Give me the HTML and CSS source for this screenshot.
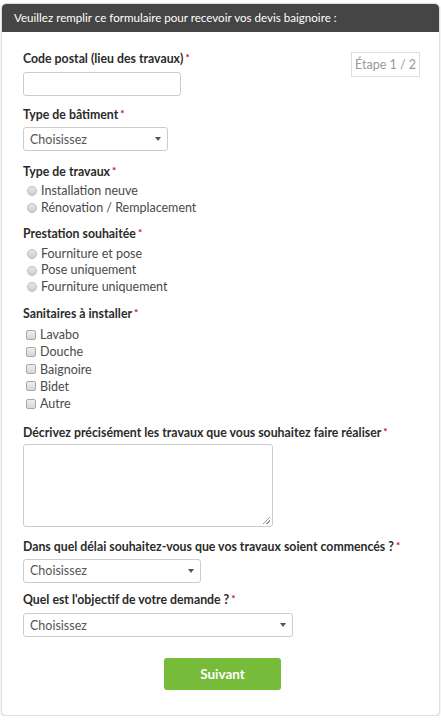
FILE: index.html
```html
<!DOCTYPE html>
<html lang="fr">
<head>
<meta charset="utf-8">
<title>Devis baignoire</title>
<link rel="stylesheet" href="styles.css">
</head>
<body>
<div class="card">
  <div class="card-head">Veuillez remplir ce formulaire pour recevoir vos devis baignoire :</div>
  <form class="card-body">
    <div class="row-top">
      <div class="field f-cp">
        <label class="lbl lbl-cp">Code postal (lieu des travaux)<span class="req">*</span></label>
        <input class="txt w-cp" type="text">
      </div>
      <div class="step">Étape 1 / 2</div>
    </div>

    <div class="field f-bat">
      <label class="lbl">Type de bâtiment<span class="req">*</span></label>
      <div class="sel w-bat"><span>Choisissez</span><i class="caret"></i></div>
    </div>

    <div class="field">
      <label class="lbl lbl-opts">Type de travaux<span class="req">*</span></label>
      <div class="opts">
        <label class="opt"><span class="radio"></span>Installation neuve</label>
        <label class="opt"><span class="radio"></span>Rénovation / Remplacement</label>
      </div>
    </div>

    <div class="field">
      <label class="lbl lbl-opts2">Prestation souhaitée<span class="req">*</span></label>
      <div class="opts opts3">
        <label class="opt"><span class="radio"></span>Fourniture et pose</label>
        <label class="opt"><span class="radio"></span>Pose uniquement</label>
        <label class="opt"><span class="radio"></span>Fourniture uniquement</label>
      </div>
    </div>

    <div class="field f-checks">
      <label class="lbl lbl-checks">Sanitaires à installer<span class="req">*</span></label>
      <div class="opts checks">
        <label class="opt"><span class="check"></span>Lavabo</label>
        <label class="opt"><span class="check"></span>Douche</label>
        <label class="opt"><span class="check"></span>Baignoire</label>
        <label class="opt"><span class="check"></span>Bidet</label>
        <label class="opt"><span class="check"></span>Autre</label>
      </div>
    </div>

    <div class="field f-area">
      <label class="lbl lbl-area">Décrivez précisément les travaux que vous souhaitez faire réaliser<span class="req">*</span></label>
      <div class="area"><i class="grip"></i></div>
    </div>

    <div class="field f-delai">
      <label class="lbl">Dans quel délai souhaitez-vous que vos travaux soient commencés ?<span class="req">*</span></label>
      <div class="sel w-delai"><span>Choisissez</span><i class="caret"></i></div>
    </div>

    <div class="field f-obj">
      <label class="lbl lbl-obj">Quel est l'objectif de votre demande ?<span class="req">*</span></label>
      <div class="sel w-obj"><span>Choisissez</span><i class="caret"></i></div>
    </div>

    <div class="actions">
      <button type="button" class="btn">Suivant</button>
    </div>
  </form>
</div>
</body>
</html>
```
FILE: styles.css
```css
* { box-sizing: border-box; }
body {
  margin: 0;
  background: #fff;
  font-family: "Lato", "Liberation Sans", sans-serif;
  color: #333;
}
.card {
  margin: 3px 1px 0 1px;
  height: 713px;
  border: 1px solid #dedede;
  border-radius: 5px;
  box-shadow: 0 1px 2px rgba(0,0,0,0.15);
  background: #fff;
  overflow: hidden;
}
.card-head {
  background: #454545;
  color: #fff;
  font-size: 11.6px;
  height: 28px;
  line-height: 28px;
  padding-left: 12px;
  border-radius: 4px 4px 0 0;
}
.card-body {
  padding: 19px 19px 0 21px;
  display: flex;
  flex-direction: column;
}
.row-top {
  display: flex;
  justify-content: space-between;
  align-items: flex-start;
}
.step {
  margin-top: 1px;
  border: 1px solid #ddd;
  color: #999;
  font-size: 12.5px;
  width: 69px;
  height: 25px;
  line-height: 23px;
  text-align: center;
}
.field {
  display: flex;
  flex-direction: column;
  align-items: flex-start;
  margin-bottom: 10px;
}
.f-cp { margin-bottom: 11px; }
.f-bat { margin-bottom: 13px; }
.f-checks { margin-bottom: 13px; }
.f-area { margin-bottom: 11.5px; }
.f-delai { margin-bottom: 9.5px; }
.f-obj { margin-bottom: 21px; }
.lbl {
  font-weight: bold;
  font-size: 12.3px;
  line-height: 16px;
  margin-bottom: 4px;
  color: #2b2b2b;
}
.lbl-cp { margin-bottom: 5px; }
.lbl-opts { margin-bottom: 2px; }
.lbl-opts2 { margin-bottom: 3.5px; }
.lbl-checks { margin-bottom: 4.3px; }
.lbl-area { margin-bottom: 3px; }
.lbl-obj { margin-bottom: 5px; }
.req {
  color: #d0021b;
  font-size: 10px;
  vertical-align: top;
  margin-left: 2px;
  line-height: 12px;
}
.txt {
  height: 24px;
  border: 1px solid #ccc;
  border-radius: 3px;
  background: #fff;
  outline: none;
}
.w-cp { width: 158px; }
.sel {
  height: 24px;
  border: 1px solid #ccc;
  border-radius: 3px;
  display: flex;
  align-items: center;
  justify-content: space-between;
  padding: 0 6px 0 6px;
  font-size: 12.5px;
  color: #555;
}
.caret {
  width: 0; height: 0;
  border-left: 3.5px solid transparent;
  border-right: 3.5px solid transparent;
  border-top: 4px solid #555;
}
.w-bat { width: 145px; }
.w-delai { width: 178px; }
.w-obj { width: 270px; }
.opts {
  display: flex;
  flex-direction: column;
  padding-left: 3px;
}
.opt {
  display: flex;
  align-items: center;
  font-size: 12.5px;
  line-height: 17px;
  color: #4a4a4a;
}
.opts3 .opt { line-height: 16.7px; }
.radio {
  width: 10px; height: 10px;
  border-radius: 50%;
  border: 1px solid #bbb;
  background: linear-gradient(#e8e8e8, #cdcdcd);
  margin-right: 4px;
  margin-left: 1px;
}
.checks .opt { line-height: 17.3px; }
.check {
  width: 10px; height: 10px;
  border-radius: 2px;
  border: 1px solid #a8a8a8;
  background: linear-gradient(#efefef, #d6d6d6);
  margin-right: 4px;
  margin-left: 0;
}
.area {
  width: 250px;
  height: 83px;
  border: 1px solid #ccc;
  border-radius: 3px;
  position: relative;
}
.grip {
  position: absolute;
  right: 2px; bottom: 2px;
  width: 7px; height: 7px;
  background: linear-gradient(135deg, transparent 45%, #999 45%, #999 55%, transparent 55%, transparent 70%, #999 70%, #999 80%, transparent 80%);
}
.actions {
  display: flex;
  justify-content: center;
  padding-left: 2px;
}
.btn {
  width: 117px;
  height: 32px;
  border: none;
  border-radius: 3px;
  background: #76bb3a;
  color: #fff;
  font-family: inherit;
  font-weight: bold;
  font-size: 13.5px;
}
```
